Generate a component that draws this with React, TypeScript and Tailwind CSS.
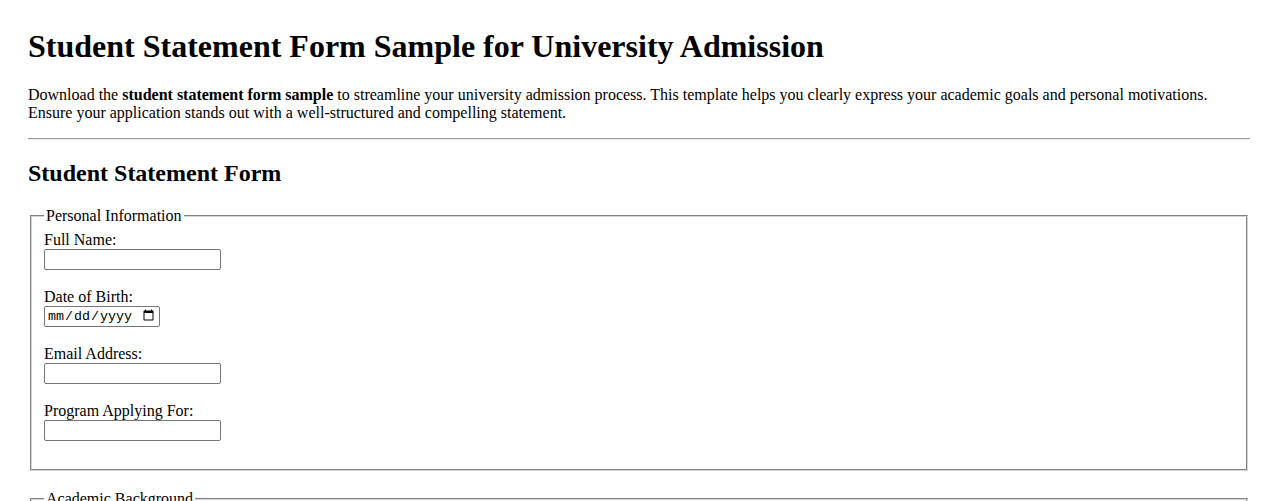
import React from "react";

function Field({ label, type = "text" }: { label: string; type?: string }) {
  return (
    <div className="mb-[18.7px]">
      <label className="block h-[17.3px] leading-[18.4px]">{label}</label>
      {type === "date" ? (
        <input
          type="date"
          className="block h-[21px] w-[116px] rounded-[2px] border border-[#767676] bg-white px-[2px] py-[1px] font-['Liberation_Mono',monospace] text-[13.33px] leading-[normal] text-black"
        />
      ) : (
        <input
          type={type}
          className="block h-[21px] w-[177px] rounded-[2px] border border-[#767676] bg-white px-[2px] py-[1px] font-['Liberation_Sans',Arial,sans-serif] text-[13.33px] leading-[normal] text-black"
        />
      )}
    </div>
  );
}

export default function App() {
  return (
    <div className="min-h-[501px] bg-white px-[28px] pt-[28px] font-['Liberation_Serif','Times_New_Roman',serif] text-[16px] leading-[normal] text-black">
      <h1 className="mb-[21.44px] text-[32px] font-bold leading-[normal]">
        Student Statement Form Sample for University Admission
      </h1>
      <p className="mb-[16px] leading-[normal]">
        Download the <b className="font-bold">student statement form sample</b> to streamline your
        university admission process. This template helps you clearly express your academic goals
        and personal motivations. Ensure your application stands out with a well-structured and
        compelling statement.
      </p>
      <hr className="h-0 border-t border-b border-t-[#9a9a9a] border-b-[#eeeeee]" />
      <h2 className="mt-[19.92px] mb-[19.92px] text-[24px] font-bold leading-[normal]">
        Student Statement Form
      </h2>
      <fieldset className="mx-[2px] border-2 border-[#d6d6d6] px-[12px] pt-[5.6px] pb-[9.5px] [border-style:groove]">
        <legend className="px-[2px] leading-[18.4px]">Personal Information</legend>
        <Field label="Full Name:" />
        <Field label="Date of Birth:" type="date" />
        <Field label="Email Address:" type="email" />
        <Field label="Program Applying For:" />
      </fieldset>
      <fieldset className="mx-[2px] mt-[19.5px] border-2 border-[#d6d6d6] px-[12px] pt-[5.6px] pb-[9.5px] [border-style:groove]">
        <legend className="px-[2px] leading-[18.4px]">Academic Background</legend>
        <Field label="High School Name:" />
        <Field label="Graduation Year:" />
      </fieldset>
    </div>
  );
}
